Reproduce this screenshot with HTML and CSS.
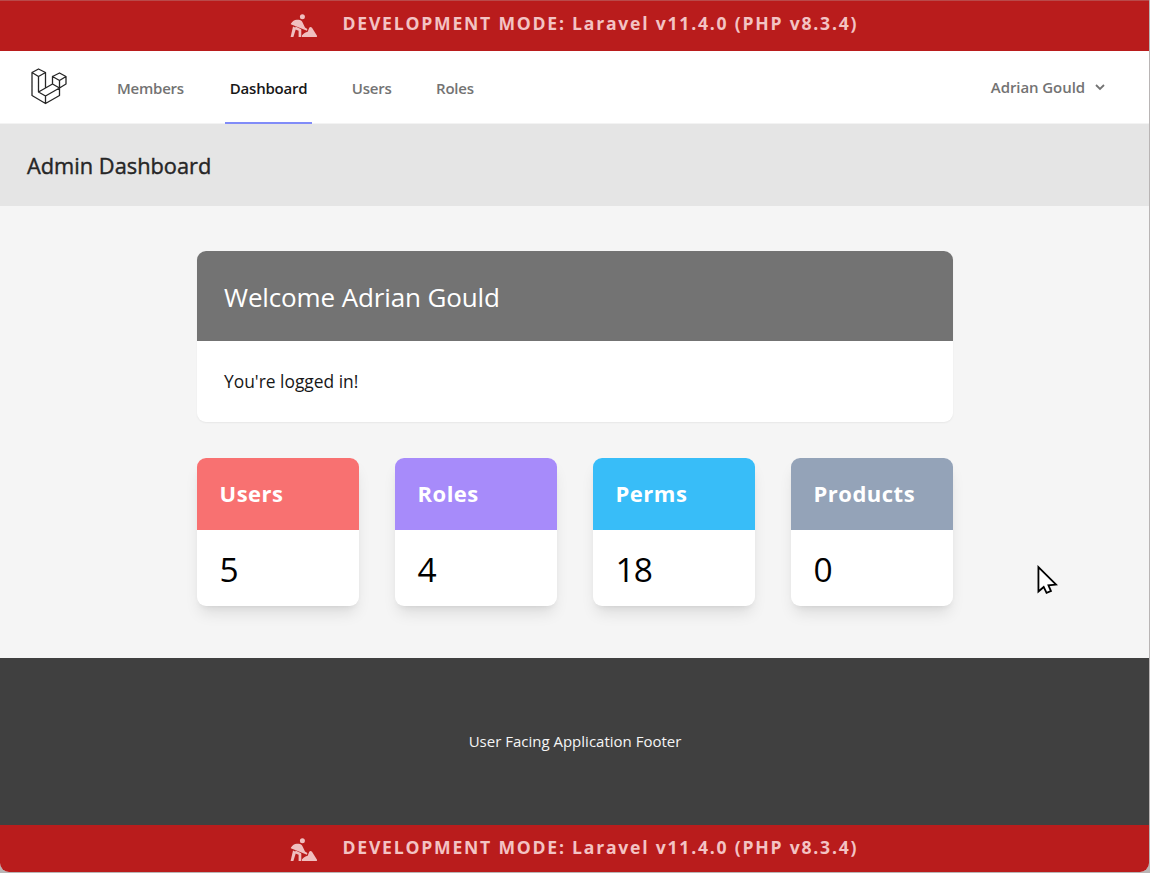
FILE: index.html
```
<!DOCTYPE html>
<html lang="en">
<head>
<meta charset="utf-8">
<title>Admin Dashboard</title>
<link rel="stylesheet" href="styles.css">
</head>
<body>
<svg class="symbols" width="0" height="0">
  <symbol id="digger" viewBox="0 0 28 24">
    <circle cx="12.4" cy="2.7" r="2.5"/>
    <path d="M1 9.4 C2.6 7.4 4.3 5.8 6.8 5.8 H8.6 C10.6 5.8 11.8 6.8 12.6 8.4 L15 13.6 L17.3 15 L17 16.8 L.8 10.2Z"/>
    <path d="M3 12.6 L6.2 14 L3.4 23 H.6Z"/>
    <path d="M5.5 12.6 L10.8 14.9 Q11.3 15.2 11.3 16 V23 H8.6 V16.8 L5 15.2Z"/>
    <path d="M12 23 V21.2 Q14 19 15.5 18.5 L17.7 17.8 L19.2 13.8 Q20.6 12 22 13.8 L27 21.8 Q27.4 23 26.4 23Z"/>
  </symbol>
</svg>
<div class="window">
  <div class="banner banner-top">
    <svg class="digger"><use href="#digger"/></svg>
    <span class="banner-text">DEVELOPMENT MODE: Laravel v11.4.0 (PHP v8.3.4)</span>
  </div>
  <nav class="nav">
    <svg class="logo" viewBox="0 0 38 38">
      <path d="M2 5.5 8.5 2 15.5 5.5V21L8.5 25V9.5L2 5.5V28.5L15.5 36.5 29.5 28.5V21L15.5 29 8.5 25M8.5 9.5 15.5 5.5M15.5 21 22.5 17M15.5 29V36.5M22.5 9.5 29.5 6 36 9.5V17L29.5 21 22.5 17V9.5L29.5 13.5 36 9.5M29.5 13.5V21"/>
    </svg>
    <a class="link link-members"><span>Members</span></a>
    <a class="link link-active"><span>Dashboard</span></a>
    <a class="link"><span>Users</span></a>
    <a class="link"><span>Roles</span></a>
    <div class="account"><span>Adrian Gould</span>
      <svg class="chevron" viewBox="0 0 10 7"><path d="M1 1 5 5 9 1"/></svg>
    </div>
  </nav>
  <header class="heading"><h1>Admin Dashboard</h1></header>
  <main class="main">
    <section class="welcome">
      <h2>Welcome Adrian Gould</h2>
      <p>You're logged in!</p>
    </section>
    <section class="stats">
      <article class="card red"><h3>Users</h3><p>5</p></article>
      <article class="card violet"><h3>Roles</h3><p>4</p></article>
      <article class="card sky"><h3>Perms</h3><p>18</p></article>
      <article class="card slate"><h3>Products</h3><p>0</p></article>
    </section>
  </main>
  <footer class="footer"><span>User Facing Application Footer</span></footer>
  <div class="banner banner-bottom">
    <svg class="digger"><use href="#digger"/></svg>
    <span class="banner-text">DEVELOPMENT MODE: Laravel v11.4.0 (PHP v8.3.4)</span>
  </div>
</div>
<svg class="cursor" viewBox="0 0 22 30"><path d="M1.5 1.5V27L7 22.3 10 28.5 14.6 26.6 12 20.5 20 19.8Z"/></svg>
</body>
</html>
```
FILE: styles.css
```
* { box-sizing: border-box; margin: 0; }
body {
  width: 1150px; height: 873px; overflow: hidden;
  background: #b9b5b5;
  font-family: "Open Sans", "Noto Sans", sans-serif;
}
.symbols { position: absolute; }
.window {
  width: 1149px; height: 872px; overflow: hidden;
  display: flex; flex-direction: column;
  background: #f5f5f5;
  border-radius: 0 0 9px 9px;
}
.banner {
  display: flex; justify-content: flex-start; flex: none;
  padding-left: 290px; gap: 24.5px;
  background: #b91c1c; color: #f3c3c3;
}
.banner-top { height: 51px; padding-top: 14px; border-top: 1px solid #b94a4a; }
.banner-top .digger, .banner-top .banner-text { margin-top: -1px; }
.banner-bottom { height: 47px; padding-top: 13px; }
.digger { width: 28px; height: 24px; fill: #f0bfbf; }
.banner-text {
  font-size: 17.6px; font-weight: 700; line-height: 18px; letter-spacing: 1.77px; white-space: nowrap;
}
.nav {
  height: 73px; flex: none; display: flex; align-items: stretch;
  background: #fff; border-bottom: 1px solid #f3f3f3;
  padding: 0 44px 0 30px;
}
.logo { width: 38px; height: 38px; margin-top: 16px; fill: none; stroke: #262626; stroke-width: 1.3; stroke-linejoin: round; }
.link {
  margin-right: 34.6px; padding: 26px 5px 0; height: 73px;
  font-size: 15px; line-height: 22px; font-weight: 600; color: #737373; white-space: nowrap;
  letter-spacing: -.24px;
}
.link-members { margin-left: 44px; margin-right: 36px; }
.link-active { color: #171717; border-bottom: 2px solid #818cf8; }
.account {
  margin-left: auto; display: flex; gap: 10px; padding-top: 25px;
  font-size: 15px; line-height: 22px; font-weight: 600; color: #737373; letter-spacing: -.08px;
}
.chevron { width: 10px; height: 7px; margin-top: 8px; fill: none; stroke: #737373; stroke-width: 1.8; }
.heading { height: 82px; flex: none; background: #e5e5e5; padding: 27px; }
.heading h1 {
  font-size: 21.8px; line-height: 30px; font-weight: 400; color: #262626;
  -webkit-text-stroke: .4px currentColor;
}
.main { width: 756px; height: 452px; flex: none; margin-left: 197px; padding-top: 45px; }
.welcome {
  height: 171px; border-radius: 9px; overflow: hidden; background: #fff;
  box-shadow: 0 1px 2px rgba(0,0,0,.06);
}
.welcome h2 {
  height: 90px; padding: 26px 27px; background: #737373; color: #fff;
  font-size: 26px; line-height: 40px; font-weight: 400; letter-spacing: -.13px;
}
.welcome p { padding: 27px; font-size: 17.4px; line-height: 27px; color: #171717; }
.stats { margin-top: 36px; display: grid; grid-template-columns: repeat(4, 162px); gap: 36px; }
.card {
  height: 148px; border-radius: 9px; overflow: hidden; background: #fff;
  box-shadow: 0 10px 15px -3px rgba(0,0,0,.1), 0 4px 6px -4px rgba(0,0,0,.1);
}
.card h3 {
  height: 72px; padding: 19px 22.5px; color: #fff;
  font-size: 22px; line-height: 32px; font-weight: 700; letter-spacing: .5px;
}
.card p { padding: 19px 22.5px; font-size: 33.5px; line-height: 40px; letter-spacing: -1px; color: #000; }
.red h3 { background: #f87171; }
.violet h3 { background: #a78bfa; }
.sky h3 { background: #38bdf8; }
.slate h3 { background: #94a3b8; }
.footer {
  height: 167px; flex: none; display: flex; justify-content: center; align-items: center;
  padding: 0 0 2px 1px;
  background: #404040; color: #f5f5f5; font-size: 15px; line-height: 22px;
}
.cursor { position: absolute; left: 1036.5px; top: 565px; width: 21px; height: 30px; fill: #fff; stroke: #000; stroke-width: 1.9; }
```
